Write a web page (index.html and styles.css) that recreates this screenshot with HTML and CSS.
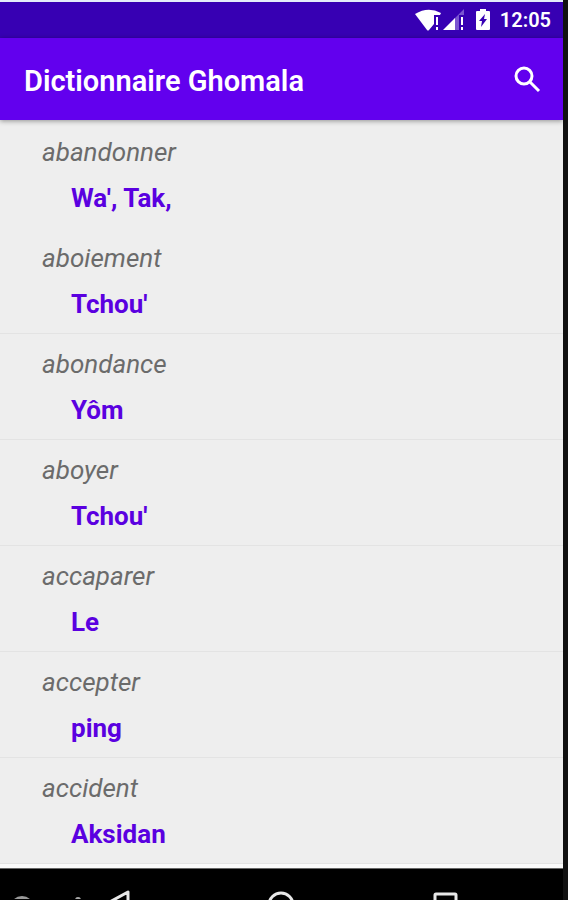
FILE: index.html
```html
<!DOCTYPE html>
<html lang="fr">
<head>
<meta charset="utf-8">
<meta name="viewport" content="width=device-width, initial-scale=1">
<title>Dictionnaire Ghomala</title>
<link rel="stylesheet" href="styles.css">
</head>
<body>
<div class="screen">
  <div class="status">
    <svg class="signals" width="50" height="24" viewBox="0 0 50 24" aria-hidden="true">
      <path fill="#fff" d="M0 6Q13-2 26 5L25 7H19V16L14 22Q13 23 12 22Z"/>
      <path fill="#fff" d="M21 9h2v8h-2zM21 19h2v3h-2z"/>
      <path fill="#7a55d0" d="M39 11L49 1V7H44V22H39Z"/>
      <path fill="#fff" d="M28 22L40 10V22Z"/>
      <path fill="#fff" d="M46 9h2v8h-2zM46 19h2v3h-2z"/>
    </svg>
    <svg class="battery" width="14" height="24" viewBox="0 0 14 24" aria-hidden="true">
      <path fill="#fff" fill-rule="evenodd" d="M4 1H10V3H13Q14 3 14 4V21Q14 22 13 22H1Q0 22 0 21V4Q0 3 1 3H4ZM9 6L3 13H6L5 19L11 11H8Z"/>
    </svg>
    <time class="clock">12:05</time>
  </div>
  <header class="appbar">
    <h1 class="title">Dictionnaire Ghomala</h1>
    <button class="search" type="button" aria-label="Rechercher">
      <svg width="28" height="28" viewBox="0 0 28 28" fill="none" stroke="#fff" stroke-width="3">
        <circle cx="11" cy="11" r="8"/>
        <path d="M16.500 16.500L26 26"/>
      </svg>
    </button>
  </header>
  <dl class="words">
    <div class="entry first"><dt>abandonner</dt><dd>Wa', Tak,</dd></div>
    <div class="entry"><dt>aboiement</dt><dd>Tchou'</dd></div>
    <div class="entry"><dt>abondance</dt><dd>Yôm</dd></div>
    <div class="entry"><dt>aboyer</dt><dd>Tchou'</dd></div>
    <div class="entry"><dt>accaparer</dt><dd>Le</dd></div>
    <div class="entry"><dt>accepter</dt><dd>ping</dd></div>
    <div class="entry"><dt>accident</dt><dd>Aksidan</dd></div>
  </dl>
  <nav class="navbar">
    <svg class="smudge" width="90" height="30" viewBox="0 0 90 30" aria-hidden="true">
      <circle cx="22" cy="39" r="12" fill="#999"/>
      <circle cx="78" cy="31" r="3" fill="#aaa"/>
    </svg>
    <button type="button" aria-label="Retour">
      <svg width="28" height="28" viewBox="0 0 28 28" fill="none" stroke="#e8e8e8" stroke-width="3" stroke-linejoin="round"><path d="M24 2V26L2 14Z"/></svg>
    </button>
    <button type="button" aria-label="Accueil">
      <svg width="28" height="28" viewBox="0 0 28 28" fill="none" stroke="#e8e8e8" stroke-width="3"><circle cx="14" cy="15" r="12"/></svg>
    </button>
    <button type="button" aria-label="Applications récentes">
      <svg width="28" height="28" viewBox="0 0 28 28" fill="none" stroke="#e8e8e8" stroke-width="3"><rect x="4" y="4" width="21" height="22" rx="1"/></svg>
    </button>
  </nav>
</div>
</body>
</html>
```
FILE: styles.css
```css
* {
  box-sizing: border-box;
}

body {
  margin: 0;
  background: #111;
  font-family: Roboto, "Liberation Sans", sans-serif;
}

button {
  padding: 0;
  border: 0;
  background: none;
}

svg {
  display: block;
}

.screen {
  display: flex;
  flex-direction: column;
  height: 100vh;
  margin-right: 5px;
  overflow: hidden;
  background: #eee;
}

.status {
  display: flex;
  flex: none;
  align-items: center;
  justify-content: flex-end;
  height: 38px;
  padding-right: 12px;
  border-top: 2px solid #e4ecfa;
  background: #3700b3;
  color: #fff;
}

.battery {
  margin: 0 10px 0 11px;
}

.clock {
  font-size: 20px;
  font-weight: 600;
  line-height: 24px;
}

.appbar {
  position: relative;
  display: flex;
  flex: none;
  align-items: center;
  justify-content: space-between;
  height: 82px;
  padding: 0 22px 0 24px;
  background: #6200ee;
  box-shadow: 0 1px 5px rgba(0, 0, 0, 0.4);
  color: #fff;
}

.title {
  margin: 0;
  padding-top: 4px;
  font-size: 29px;
  font-weight: 600;
  line-height: 36px;
}

.words {
  flex: none;
  margin: 0;
  padding-top: 2px;
  border-bottom: 4px solid #fafafa;
}

.entry {
  height: 106px;
  padding: 12px 42px 0;
  border-bottom: 1px solid #e3e3e3;
}

.entry.first {
  border-color: transparent;
}

dt {
  color: #6b6b6b;
  font-size: 26px;
  font-style: italic;
  line-height: 36px;
}

dd {
  margin: 10px 0 0 29px;
  color: #5a00e0;
  font-size: 26px;
  font-weight: 700;
  line-height: 36px;
}

.navbar {
  position: relative;
  display: grid;
  flex: 1;
  grid-template-columns: repeat(3, 1fr);
  align-items: start;
  justify-items: center;
  min-height: 0;
  padding: 21px 36px 0;
  border-top: 1px solid #666;
  overflow: hidden;
  background: #000;
}

.smudge {
  position: absolute;
  top: 0;
  left: 0;
}
```
